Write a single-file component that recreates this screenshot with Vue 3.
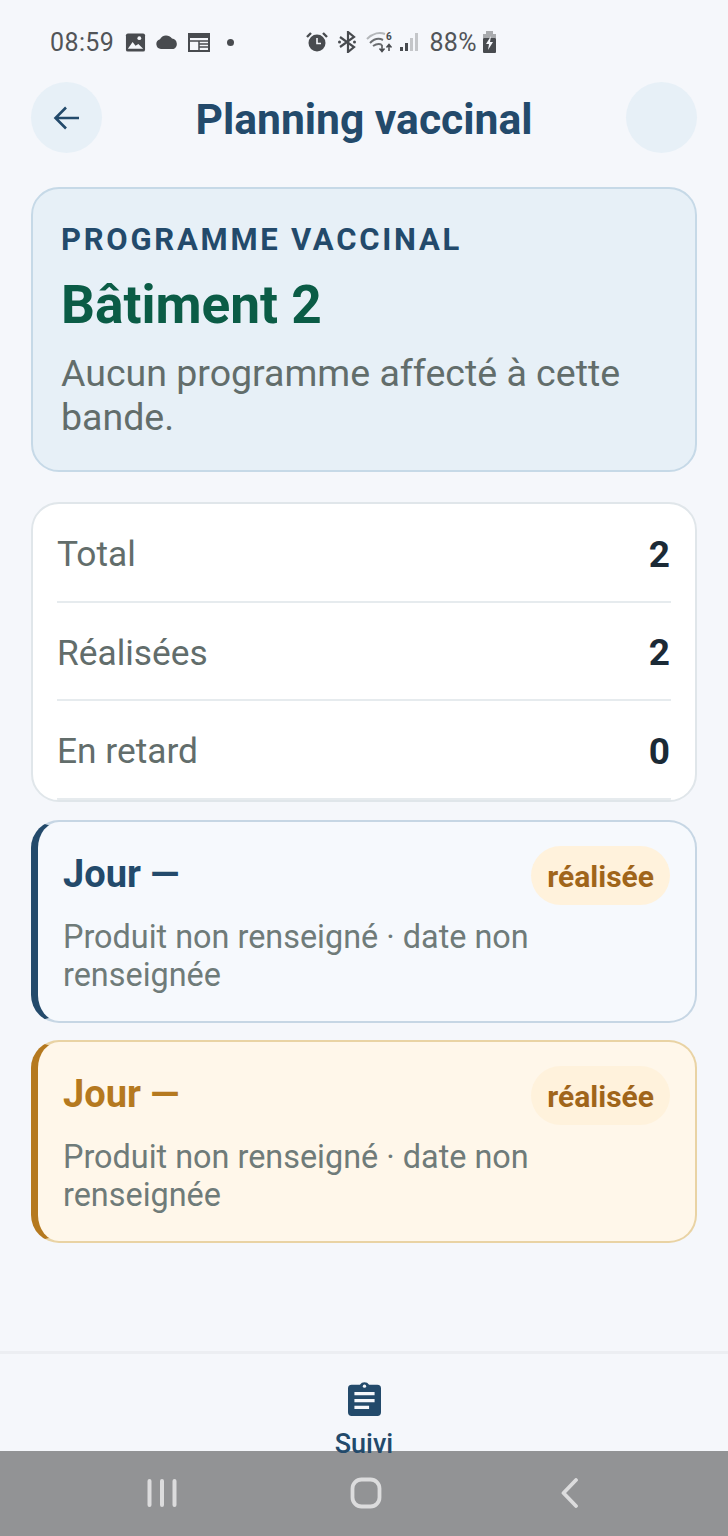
<template>
  <div class="screen">
    <div class="status-bar">
      <div class="status-left">
        <span class="status-text">08:59</span>
        <svg class="st-icon" width="21" height="20" viewBox="0 0 22 20">
          <rect x="1" y="1" width="20" height="19" rx="2" fill="#484b4f" />
          <circle cx="15" cy="6" r="2" fill="#f5f7fb" />
          <path d="M3 17l5-7 3 4 3-2 5 5z" fill="#f5f7fb" />
        </svg>
        <svg class="st-icon cloud" width="24" height="16" viewBox="0 0 24 16">
          <path d="M6 15a5 5 0 0 1-1-9.800A7 7 0 0 1 17 4.500 5.500 5.500 0 0 1 18.500 15z" fill="#484b4f" />
        </svg>
        <svg class="st-icon cal" width="22" height="20" viewBox="0 0 22 20">
          <path d="M1 2h20v17H1z" fill="none" stroke="#484b4f" stroke-width="2" />
          <rect x="1" y="1" width="20" height="5" fill="#484b4f" />
          <path d="M2 9h18M11 12h9M11 15h9M11 9v9" stroke="#484b4f" stroke-width="1.500" fill="none" />
        </svg>
        <span class="status-dot"></span>
      </div>
      <div class="status-right">
        <svg width="22" height="22" viewBox="0 0 22 22">
          <circle cx="11" cy="12" r="8.500" fill="#484b4f" />
          <path d="M11 7v5.500h4" stroke="#f5f7fb" stroke-width="1.600" fill="none" />
          <path d="M1 6l4-4M21 6l-4-4" stroke="#484b4f" stroke-width="2.400" />
        </svg>
        <svg class="bt" width="20" height="22" viewBox="0 0 20 22">
          <path d="M3 6l14 10-6 5V1l6 5L3 16" stroke="#484b4f" stroke-width="2.200" fill="none" />
          <circle cx="2.500" cy="11" r="1.500" fill="#484b4f" />
          <circle cx="17.500" cy="11" r="1.500" fill="#484b4f" />
        </svg>
        <svg class="wifi" width="28" height="22" viewBox="0 0 28 22">
          <path d="M1 8c6-6 13-7 18-5" stroke="#b4b7ba" stroke-width="2" fill="none" />
          <path d="M4 12c4-4 9-5 13-3M7 15c3-2 6-3 9-1" stroke="#6b6e71" stroke-width="2" fill="none" />
          <path d="M16 14v6M13.500 17.500l2.500 3 2.500-3M23 20v-6M20.500 16.500l2.500-3 2.500 3" stroke="#484b4f" stroke-width="1.500" fill="none" />
          <text x="20" y="9" class="wifi-six">6</text>
        </svg>
        <svg class="signal" width="20" height="22" viewBox="0 0 20 22">
          <rect x="1" y="16" width="3" height="4" fill="#484b4f" />
          <rect x="6" y="12" width="3" height="8" fill="#484b4f" />
          <rect x="11" y="7" width="3" height="13" fill="#c4c6c9" />
          <rect x="16" y="2" width="3" height="18" fill="#c4c6c9" />
        </svg>
        <span class="status-text pct">88%</span>
        <svg class="batt" width="15" height="22" viewBox="0 0 15 22">
          <rect x="4" y="0" width="7" height="4" fill="#a9abae" />
          <rect x="1" y="3" width="13" height="4" fill="#a9abae" />
          <rect x="1" y="7" width="13" height="15" rx="1" fill="#484b4f" />
          <path d="M9 5L4 13h3l-1 6 5-8H8z" fill="#f5f7fb" />
        </svg>
      </div>
    </div>

    <header class="top-bar">
      <button class="round-btn">
        <svg width="30" height="30" viewBox="0 0 30 30">
          <path d="M27 15H4M14 4.500L3.500 15 14 25.500" stroke="#234a6b" stroke-width="2.600" fill="none" />
        </svg>
      </button>
      <h1 class="page-title">Planning vaccinal</h1>
      <div class="round-btn"></div>
    </header>

    <main class="content">
      <section class="hero">
        <div class="hero-kicker">PROGRAMME VACCINAL</div>
        <div class="hero-name">Bâtiment 2</div>
        <p class="hero-text">Aucun programme affecté à cette bande.</p>
      </section>

      <section class="stats">
        <div v-for="row in stats" :key="row.label" class="stat-row">
          <span class="stat-label">{{ row.label }}</span>
          <span class="stat-value">{{ row.value }}</span>
        </div>
      </section>

      <section class="tasks">
        <article v-for="task in tasks" :key="task.id" class="task" :class="task.tone">
          <div class="task-head">
            <h3 class="task-title">Jour —</h3>
            <span class="task-badge">réalisée</span>
          </div>
          <p class="task-text">Produit non renseigné · date non renseignée</p>
        </article>
      </section>
    </main>

    <nav class="tab-bar">
      <svg class="tab-icon" width="33" height="35" viewBox="0 0 36 38">
        <path d="M4 4h9a6 6 0 0 1 10 0h9a4 4 0 0 1 4 4v26a4 4 0 0 1-4 4H4a4 4 0 0 1-4-4V8a4 4 0 0 1 4-4z" fill="#234a6b" />
        <circle cx="18" cy="5.500" r="1.800" fill="#f5f7fb" />
        <path d="M7 12h22v3.500H7zM7 19.500h22V23H7zM7 27h16v3.500H7z" fill="#f5f7fb" />
      </svg>
      <span class="tab-label">Suivi</span>
    </nav>

    <div class="system-nav">
      <svg width="30" height="30" viewBox="0 0 30 30">
        <path d="M2.500 3v24M15 3v24M27.500 3v24" stroke="#dcdcdd" stroke-width="4" stroke-linecap="round" fill="none" />
      </svg>
      <svg width="32" height="32" viewBox="0 0 32 32">
        <rect x="2.500" y="2.500" width="27" height="27" rx="9" stroke="#dcdcdd" stroke-width="3.800" fill="none" />
      </svg>
      <svg width="22" height="30" viewBox="0 0 22 30">
        <path d="M17 2L4.500 15 17 28" stroke="#dcdcdd" stroke-width="3.800" stroke-linecap="round" stroke-linejoin="round" fill="none" />
      </svg>
    </div>
  </div>
</template>

<script setup>
const stats = [
  { label: 'Total', value: 2 },
  { label: 'Réalisées', value: 2 },
  { label: 'En retard', value: 0 }
]

const tasks = [
  { id: 1, tone: 'blue' },
  { id: 2, tone: 'amber' }
]
</script>

<style>
html,
body {
  margin: 0;
  background: #f5f7fb;
}
</style>

<style scoped>
.screen {
  position: relative;
  width: 728px;
  height: 1536px;
  overflow: hidden;
  display: flex;
  flex-direction: column;
  background: #f5f7fb;
  font-family: Roboto, "Liberation Sans", sans-serif;
}

.status-bar {
  height: 82px;
  box-sizing: border-box;
  padding: 26px 231px 0 50px;
  display: flex;
  justify-content: space-between;
  align-items: flex-start;
}

.status-left,
.status-right {
  display: flex;
  align-items: center;
  height: 32px;
}

.status-text {
  font-size: 25px;
  color: #515458;
  letter-spacing: 0.4px;
}

.st-icon {
  margin-left: 11px;
}

.cloud {
  margin-left: 9px;
}

.cal {
  margin-left: 9px;
}

.status-dot {
  width: 7px;
  height: 7px;
  margin-left: 17px;
  border-radius: 50%;
  background: #484b4f;
}

.bt,
.wifi {
  margin-left: 9px;
}

.signal {
  margin-left: 5px;
}

.batt {
  margin-left: 5px;
}

.wifi-six {
  font-size: 10px;
  font-weight: 700;
  fill: #484b4f;
}

.pct {
  margin-left: 10px;
}

.top-bar {
  display: flex;
  justify-content: space-between;
  align-items: center;
  padding: 0 31px;
}

.round-btn {
  width: 71px;
  height: 71px;
  padding: 0;
  border: none;
  border-radius: 50%;
  background: #e7f0f7;
  display: flex;
  align-items: center;
  justify-content: center;
}

.page-title {
  box-sizing: border-box;
  height: 71px;
  margin: 0;
  padding-top: 3px;
  font-size: 42.600px;
  line-height: 68px;
  font-weight: 700;
  color: #234a6b;
}

.content {
  padding: 34px 31px 0;
}

.hero {
  box-sizing: border-box;
  height: 285px;
  padding: 33px 28px 0;
  border: 2px solid #c6d9e7;
  border-radius: 28px;
  background: #e7f0f7;
}

.hero-kicker {
  font-size: 31px;
  line-height: 36px;
  font-weight: 700;
  letter-spacing: 2.750px;
  color: #234a6b;
}

.hero-name {
  margin-top: 17px;
  font-size: 53.200px;
  line-height: 60px;
  font-weight: 700;
  color: #0b5c46;
}

.hero-text {
  margin: 16px 0 0;
  font-size: 37.500px;
  line-height: 44px;
  color: #626d6b;
}

.stats {
  box-sizing: border-box;
  height: 300px;
  margin-top: 30px;
  padding: 0 24px;
  border: 2px solid #e0e6ea;
  border-radius: 28px;
  background: #fff;
  overflow: hidden;
}

.stat-row {
  height: 98.500px;
  box-sizing: border-box;
  padding-top: 4px;
  display: flex;
  justify-content: space-between;
  align-items: center;
  border-bottom: 2px solid #e6ebee;
}

.stat-label {
  font-size: 35.300px;
  color: #626d6b;
}

.stat-value {
  padding-right: 1px;
  font-size: 37px;
  font-weight: 700;
  color: #1b2a36;
}

.tasks {
  margin-top: 18px;
  display: flex;
  flex-direction: column;
  gap: 17px;
}

.task {
  box-sizing: border-box;
  height: 203px;
  padding: 24px 25px 0 25px;
  border: 2px solid;
  border-left-width: 7px;
  border-radius: 28px;
}

.task.blue {
  background: #f6f9fd;
  border-color: #c6d6e4;
  border-left-color: #234a6b;
}

.task.amber {
  background: #fff7ea;
  border-color: #e9d3a4;
  border-left-color: #b5791f;
}

.task-head {
  display: flex;
  justify-content: space-between;
  align-items: flex-start;
}

.task-title {
  margin: 0;
  padding-top: 6px;
  font-size: 38px;
  line-height: 44px;
  font-weight: 700;
}

.blue .task-title {
  color: #234a6b;
}

.amber .task-title {
  color: #b5791f;
}

.task-badge {
  height: 59px;
  padding: 0 16px;
  border-radius: 30px;
  background: #fff2dc;
  font-size: 30px;
  line-height: 62px;
  font-weight: 700;
  color: #a0651a;
}

.task-text {
  margin: 13px 0 0;
  width: 520px;
  font-size: 32.400px;
  line-height: 38px;
  color: #6f7b79;
}

.tab-bar {
  position: absolute;
  left: 0;
  right: 0;
  top: 1351px;
  z-index: 2;
  border-top: 3px solid #eceef2;
  box-sizing: border-box;
  display: flex;
  flex-direction: column;
  align-items: center;
  padding-top: 27px;
}

.tab-icon {
  flex-shrink: 0;
}

.tab-label {
  flex-shrink: 0;
  margin-top: 13px;
  font-size: 27px;
  line-height: 30px;
  font-weight: 500;
  color: #234a6b;
}

.system-nav {
  position: absolute;
  left: 0;
  right: 0;
  bottom: 0;
  height: 85px;
  background: #929395;
  display: grid;
  grid-template-columns: repeat(3, 204px);
  justify-content: center;
  justify-items: center;
  align-items: center;
  padding: 0 0 2px 4px;
  box-sizing: border-box;
}
</style>
